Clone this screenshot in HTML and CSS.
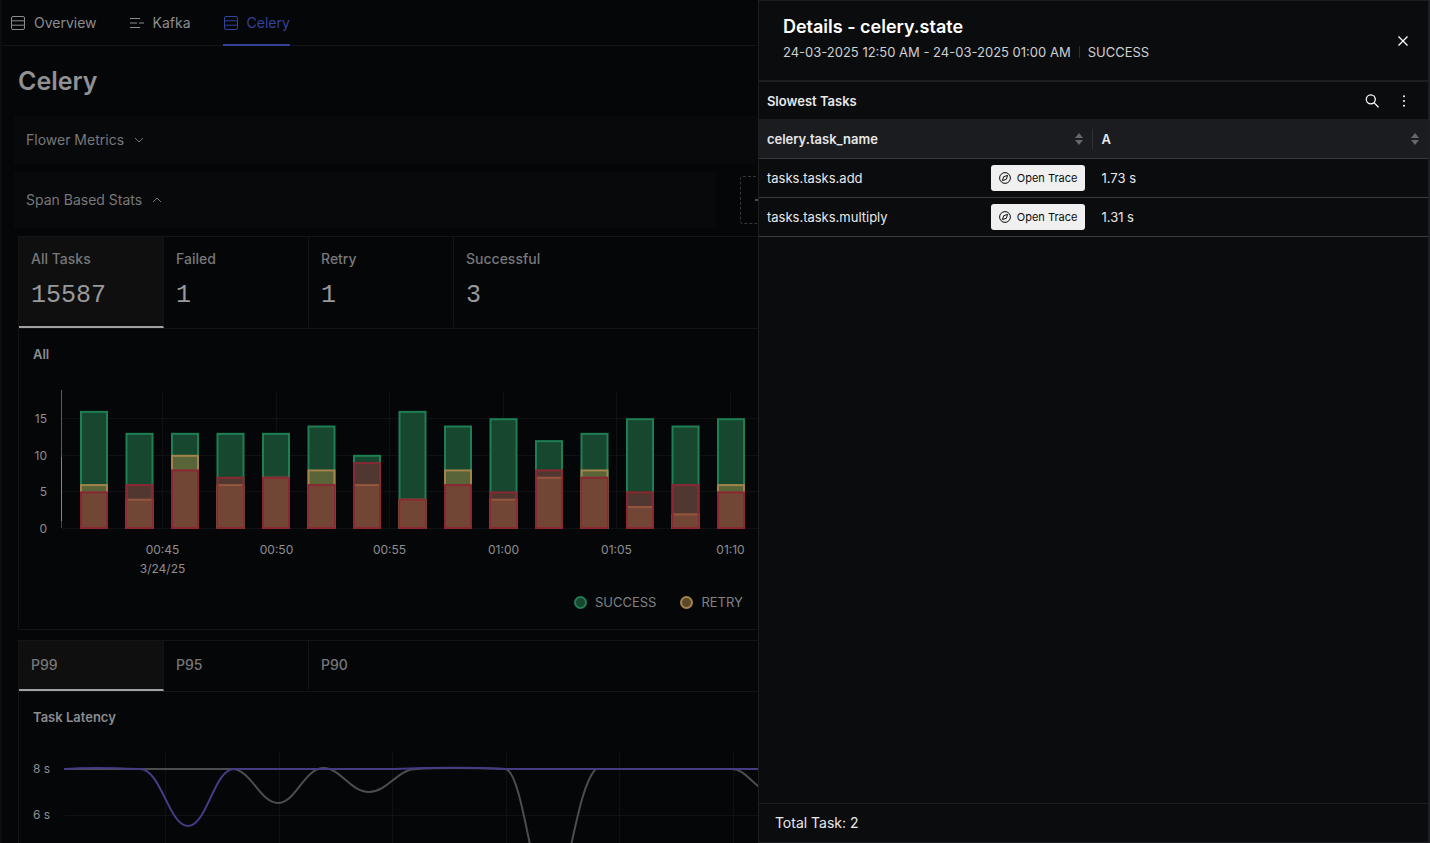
FILE: index.html
```html
<!DOCTYPE html>
<html lang="en">
<head>
  <meta charset="utf-8">
  <meta name="viewport" content="width=device-width, initial-scale=1">
  <title>Celery</title>
  <link rel="stylesheet" href="styles.css">
</head>
<body>

<div class="page">
  <nav class="tabs">
    <a class="tab" href="#overview">
      <svg class="tab-icon" width="16" height="16" viewBox="0 0 16 16"><rect x="1.5" y="1.5" width="13" height="13" rx="1.5"/><path d="M1.5 5.8h13M1.5 10.2h13"/></svg>
      Overview
    </a>
    <a class="tab" href="#kafka">
      <svg class="tab-icon" width="16" height="16" viewBox="0 0 16 16"><path d="M1 3.5h10M1 8h7M10 8h5M1 12.5h10"/></svg>
      Kafka
    </a>
    <a class="tab active" href="#celery">
      <svg class="tab-icon" width="16" height="16" viewBox="0 0 16 16"><rect x="1.5" y="1.5" width="13" height="13" rx="1.5"/><path d="M1.5 5.8h13M1.5 10.2h13"/></svg>
      Celery
    </a>
  </nav>

  <main class="content">
    <h1>Celery</h1>

    <div class="section-row">
      <button class="section" type="button">
        Flower Metrics
        <svg width="10" height="10" viewBox="0 0 10 10"><path d="M1 3l4 4 4-4"/></svg>
      </button>
    </div>
    <div class="section-row span-row">
      <button class="section" type="button">
        Span Based Stats
        <svg width="10" height="10" viewBox="0 0 10 10"><path d="M1 7l4-4 4 4"/></svg>
      </button>
      <button class="add-panel" type="button" aria-label="Add panel">
        <svg width="12" height="12" viewBox="0 0 12 12"><path d="M0 6h12M6 0v12"/></svg>
      </button>
    </div>

    <section class="card">
      <div class="stats">
        <button class="stat active" type="button"><span>All Tasks</span><strong>15587</strong></button>
        <button class="stat" type="button"><span>Failed</span><strong>1</strong></button>
        <button class="stat" type="button"><span>Retry</span><strong>1</strong></button>
        <button class="stat" type="button"><span>Successful</span><strong>3</strong></button>
      </div>
      <h2>All</h2>
      <svg class="chart" id="barChart" height="206"></svg>
      <div class="legend">
        <span class="legend-item success">SUCCESS</span>
        <span class="legend-item retry">RETRY</span>
        <span class="legend-item failure">FAILURE</span>
      </div>
    </section>

    <section class="card latency">
      <div class="stats">
        <button class="stat active" type="button"><span>P99</span></button>
        <button class="stat" type="button"><span>P95</span></button>
        <button class="stat" type="button"><span>P90</span></button>
      </div>
      <h2>Task Latency</h2>
      <svg class="chart" id="lineChart" height="200">
        <g id="lineGrid"></g>
        <text class="tick" x="14" y="30">8 s</text>
        <text class="tick" x="14" y="76">6 s</text>
        <path class="line gray" d="M45 26H213C232 26 241 60 259 60C277 60 285 25 305 25C321 25 332 49 350 49C368 49 379 26 397 26C429 24 459 25 487 26C499 30 507 86 517 130C524 150 535 150 546 130C556 86 564 38 577 26H713C723 26 729 35 739 43L769 60"/>
        <path class="line purple" d="M45 26C69 24 99 25 121 26C142 26 150 83 169 83C188 83 195 26 215 26H375C399 25 449 24 487 26H1400"/>
      </svg>
    </section>
  </main>
</div>

<aside class="drawer">
  <header class="drawer-header">
    <div class="heading">
      <h2>Details - celery.state</h2>
      <p><span>24-03-2025 12:50 AM - 24-03-2025 01:00 AM</span><span class="state">SUCCESS</span></p>
    </div>
    <button class="icon-btn" type="button" aria-label="Close">
      <svg width="16" height="16" viewBox="0 0 16 16"><path d="M3.5 3.5l9 9M12.5 3.5l-9 9"/></svg>
    </button>
  </header>

  <div class="toolbar">
    <h3>Slowest Tasks</h3>
    <button class="icon-btn" type="button" aria-label="Search">
      <svg width="16" height="16" viewBox="0 0 16 16"><circle cx="6.8" cy="6.3" r="4.5"/><path d="M10 9.6l4.500 4.600"/></svg>
    </button>
    <button class="icon-btn" type="button" aria-label="More">
      <svg class="dots" width="16" height="16" viewBox="0 0 16 16"><circle cx="8" cy="3.2" r="1"/><circle cx="8" cy="8" r="1"/><circle cx="8" cy="12.8" r="1"/></svg>
    </button>
  </div>

  <table class="tasks">
    <thead>
      <tr>
        <th><div class="cell">celery.task_name <svg class="sorter" width="8" height="12" viewBox="0 0 8 12"><path d="M4 0l4 5H0zM4 12l4-5H0z"/></svg></div></th>
        <th><div class="cell">A <svg class="sorter" width="8" height="12" viewBox="0 0 8 12"><path d="M4 0l4 5H0zM4 12l4-5H0z"/></svg></div></th>
      </tr>
    </thead>
    <tbody>
      <tr>
        <td><div class="cell">tasks.tasks.add
          <button class="trace" type="button"><svg width="12" height="12" viewBox="0 0 12 12"><circle cx="6" cy="6" r="5.4"/><path d="M8.6 3.4L7.3 7.3 3.4 8.6l1.3-3.9z"/></svg>Open Trace</button></div></td>
        <td>1.73 s</td>
      </tr>
      <tr>
        <td><div class="cell">tasks.tasks.multiply
          <button class="trace" type="button"><svg width="12" height="12" viewBox="0 0 12 12"><circle cx="6" cy="6" r="5.4"/><path d="M8.6 3.4L7.3 7.3 3.4 8.6l1.3-3.9z"/></svg>Open Trace</button></div></td>
        <td>1.31 s</td>
      </tr>
    </tbody>
  </table>

  <footer class="drawer-footer">Total Task: 2</footer>
</aside>

<script src="charts.js"></script>
</body>
</html>
```
FILE: charts.js
```js
// success, retry, failure per two minute bucket
const buckets = [
  [16, 6, 5], [13, 4, 6], [13, 10, 8], [13, 6, 7], [13, 7, 7],
  [14, 8, 6], [10, 6, 9], [16, 4, 4], [14, 8, 6], [15, 4, 5],
  [12, 7, 8], [13, 8, 7], [15, 3, 5], [14, 2, 6], [15, 6, 5]
];
const kinds = ['success', 'retry', 'failure'];
const times = ['00:45', '00:50', '00:55', '01:00', '01:05', '01:10'];

const unit = 7.32;
const baseline = 148;
const step = 45.5;

function add(parent, name, attrs, text) {
  const el = document.createElementNS('http://www.w3.org/2000/svg', name);
  for (const key in attrs) el.setAttribute(key, attrs[key]);
  if (text !== undefined) el.textContent = text;
  parent.appendChild(el);
}

function drawBars() {
  const svg = document.getElementById('barChart');

  for (const value of [0, 5, 10, 15]) {
    const y = Math.round(baseline - value * unit) + 0.5;
    add(svg, 'line', { class: 'grid', x1: 43, x2: '98%', y1: y, y2: y });
    add(svg, 'text', { class: 'tick end', x: 28, y: y + 4 }, value);
  }

  times.forEach((time, i) => {
    const x = Math.round(143 + i * 113.6) + 0.5;
    add(svg, 'line', { class: 'grid', x1: x, x2: x, y1: 12, y2: baseline });
    add(svg, 'text', { class: 'tick middle', x: x, y: 174 }, time);
  });
  add(svg, 'text', { class: 'tick middle', x: 143.5, y: 193 }, '3/24/25');

  // bucket cut off by the left edge
  add(svg, 'rect', { class: 'edge-success', x: 42, y: 10, width: 1, height: 67 });
  add(svg, 'rect', { class: 'edge-retry', x: 42, y: 77, width: 1, height: 64 });
  add(svg, 'rect', { class: 'edge-failure', x: 42, y: 141, width: 1, height: 7 });

  buckets.forEach((bucket, i) => {
    bucket.forEach((value, k) => {
      add(svg, 'rect', {
        class: 'bar ' + kinds[k],
        x: 62 + i * step,
        y: baseline - value * unit + 1,
        width: 26,
        height: value * unit - 1
      });
    });
  });
}

function drawLineGrid() {
  const grid = document.getElementById('lineGrid');
  for (let i = 0; i < 6; i++) {
    const x = Math.round(146 + i * 113.6) + 0.5;
    add(grid, 'line', { class: 'grid', x1: x, x2: x, y1: 8, y2: 200 });
  }
  add(grid, 'line', { class: 'grid', x1: 46, x2: '98%', y1: 72.5, y2: 72.5 });
}

drawBars();
drawLineGrid();
```
FILE: styles.css
```css
:root {
  --bg: #050608;
  --line: #131416;
  --drawer-bg: #0b0c0e;
  --drawer-line: #1d1e21;
  --row-line: #3a3b3e;
  --muted: #77787a;
  --success: #1f7f54;
  --retry: #a2834a;
  --failure: #8a2733;
}

* {
  box-sizing: border-box;
}

body {
  margin: 0;
  background: var(--bg);
  color: #909193;
  font-family: Inter, sans-serif;
  font-size: 14px;
  line-height: 20px;
}

button {
  font: inherit;
  color: inherit;
  background: none;
  border: none;
  padding: 0;
  cursor: pointer;
}

h1, h2, h3, p {
  margin: 0;
}

svg {
  fill: none;
  stroke: currentColor;
}

.page {
  height: 100vh;
  overflow: hidden;
  border-left: 2px solid #0b0d10;
}

/* top navigation */
.tabs {
  display: flex;
  gap: 32px;
  height: 46px;
  padding-left: 8px;
  border-bottom: 1px solid var(--line);
}

.tab {
  display: flex;
  align-items: center;
  gap: 8px;
  height: 46px;
  padding-top: 2px;
  color: #8b8c8e;
  text-decoration: none;
  border-bottom: 2px solid transparent;
}

.tab.active {
  color: #34439a;
  border-color: #34439a;
}

.content {
  padding: 20px 16px 0;
}

h1 {
  font-size: 25px;
  line-height: 30px;
  font-weight: 600;
  margin-bottom: 20px;
}

.section-row {
  display: flex;
  gap: 24px;
  margin: 0 -4px 8px;
}

.section {
  flex: 1;
  display: flex;
  align-items: center;
  gap: 10px;
  height: 48px;
  padding: 0 12px;
  background: #08090b;
  color: var(--muted);
}

.span-row .section {
  height: 56px;
}

.add-panel {
  align-self: center;
  width: calc(50% - 24px);
  height: 48px;
  padding-left: 14px;
  border: 1px dashed #36373a;
  border-radius: 3px;
  text-align: left;
  line-height: 0;
}

/* cards */
.card {
  border: 1px solid var(--line);
  margin-bottom: 10px;
}

.stats {
  display: flex;
  border-bottom: 1px solid var(--line);
}

.stat {
  display: flex;
  flex-direction: column;
  gap: 12px;
  width: 145px;
  padding: 12px 12px 16px;
  text-align: left;
  color: var(--muted);
  font-weight: 500;
  border-right: 1px solid var(--line);
  border-bottom: 2px solid transparent;
}

.latency .stat {
  padding: 14px 12px;
}

.stat:last-child {
  border-right: none;
}

.stat.active {
  background: #0f0f0f;
  border-bottom-color: #a0a1a2;
}

.stat strong {
  font: 25px/29px "Liberation Mono", monospace;
  color: #98999b;
}

.card h2 {
  font-size: 13px;
  line-height: 20px;
  font-weight: 600;
  padding: 15px 14px 0;
  color: #8b8c8e;
}

.chart {
  display: block;
  width: 100%;
  margin-top: 16px;
}

.grid {
  stroke: #0f1113;
}

.tick {
  fill: #8e8f91;
  stroke: none;
  font-size: 12px;
}

.tick.end {
  text-anchor: end;
}

.tick.middle {
  text-anchor: middle;
}

.bar {
  stroke-width: 2;
}

.bar.success {
  fill: #17472f;
  stroke: var(--success);
}

.bar.retry {
  fill: rgba(157, 129, 67, 0.5);
  stroke: var(--retry);
}

.bar.failure {
  fill: rgba(137, 39, 50, 0.5);
  stroke: var(--failure);
}

.edge-success, .edge-retry, .edge-failure {
  stroke: none;
}

.edge-success { fill: var(--success); }
.edge-retry { fill: var(--retry); }
.edge-failure { fill: var(--failure); }

.line {
  stroke-width: 2;
}

.line.gray { stroke: #4c4d4f; }
.line.purple { stroke: #473b86; }

.legend {
  display: flex;
  justify-content: center;
  gap: 24px;
  padding: 6px 18px 17px 0;
  font-size: 13px;
  color: #808183;
}

.legend-item {
  display: flex;
  align-items: center;
  gap: 8px;
}

.legend-item::before {
  content: "";
  width: 9px;
  height: 9px;
  border: 2px solid;
  border-radius: 50%;
}

.legend-item.success::before {
  background: #17472f;
  border-color: var(--success);
}

.legend-item.retry::before {
  background: #5b4a2a;
  border-color: var(--retry);
}

.legend-item.failure::before {
  background: #4a1a20;
  border-color: var(--failure);
}

/* details drawer */
.drawer {
  position: fixed;
  top: 0;
  right: 0;
  bottom: 0;
  width: 47%;
  display: flex;
  flex-direction: column;
  background: var(--drawer-bg);
  color: #e8e8e9;
  border: 1px solid var(--drawer-line);
  border-right-width: 2px;
}

.drawer-header {
  display: flex;
  justify-content: space-between;
  align-items: center;
  height: 81px;
  padding: 0 15px 0 24px;
  border-bottom: 2px solid var(--drawer-line);
}

.heading {
  align-self: flex-start;
  padding-top: 13px;
}

.drawer-header h2 {
  font-size: 18px;
  line-height: 26px;
  font-weight: 600;
  color: #fff;
}

.drawer-header p {
  display: flex;
  align-items: center;
  gap: 8px;
  font-size: 13px;
  line-height: 24px;
  color: #cfd0d1;
}

.state {
  line-height: 12px;
  padding-left: 8px;
  border-left: 1px solid #2c2d30;
}

.icon-btn {
  width: 20px;
  height: 20px;
  line-height: 0;
  color: #fff;
}

.icon-btn svg {
  stroke-width: 1.3;
}

.icon-btn .dots {
  fill: currentColor;
  stroke: none;
}

.toolbar {
  display: flex;
  align-items: center;
  gap: 12px;
  height: 37px;
  padding: 0 14px 0 8px;
}

.toolbar h3 {
  flex: 1;
  font-size: 13px;
  font-weight: 600;
}

.tasks {
  width: 100%;
  table-layout: fixed;
  border-collapse: separate;
  border-spacing: 0;
  text-align: left;
  font-size: 13px;
}

.tasks th {
  height: 40px;
  padding: 0;
  background: #1b1c1f;
  font-weight: 600;
  border-bottom: 1px solid var(--row-line);
}

.tasks th .cell {
  padding: 0 9px 0 8px;
}

.tasks th:first-child .cell {
  border-right: 1px solid #303134;
}

.tasks td {
  height: 39px;
  padding: 0 8px;
  border-bottom: 1px solid var(--row-line);
}

.cell {
  display: flex;
  justify-content: space-between;
  align-items: center;
}

.sorter {
  fill: #66676a;
  stroke: none;
}

.trace {
  display: flex;
  align-items: center;
  gap: 6px;
  height: 26px;
  padding: 0 8px;
  background: #f0f0f0;
  color: #0b0c0e;
  font-size: 11px;
  border-radius: 3px;
}

.drawer-footer {
  margin-top: auto;
  padding: 9px 16px;
  border-top: 1px solid var(--drawer-line);
}
```
